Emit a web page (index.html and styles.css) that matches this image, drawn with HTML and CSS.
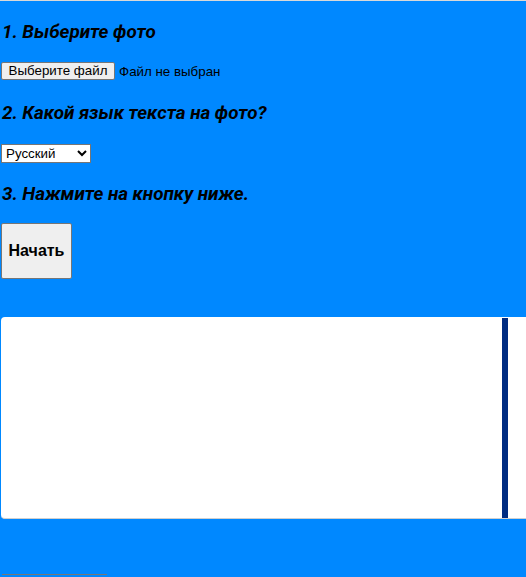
FILE: index.html
```html
<!DOCTYPE html>
<html lang="ru">
<head>
<meta charset="utf-8">
<link rel="stylesheet" href="styles.css">
</head>
<body>
<main class="page">
  <h2 class="step">1. Выберите фото</h2>
  <div class="file-row">
    <button class="file-btn" type="button">Выберите файл</button>
    <span class="file-status">Файл не выбран</span>
  </div>
  <h2 class="step">2. Какой язык текста на фото?</h2>
  <select class="lang">
    <option>Русский</option>
    <option>English</option>
  </select>
  <h2 class="step">3. Нажмите на кнопку ниже.</h2>
  <button class="start" type="button">Начать</button>
  <div class="output">
    <div class="output-bar"></div>
  </div>
  <div class="next-btn"></div>
</main>
</body>
</html>
```
FILE: styles.css
```css
html, body {
  margin: 0;
  padding: 0;
}
body {
  background: #0088ff;
  border-top: 1px solid #d9d9d9;
  overflow: hidden;
  height: 576px;
  font-family: "Liberation Sans", Arial, sans-serif;
}
.page {
  display: flex;
  flex-direction: column;
  align-items: flex-start;
  padding: 20px 0 0 1px;
}
.step {
  margin: 0 0 0 1px;
  padding-top: 1px;
  font-family: Roboto, "Liberation Sans", sans-serif;
  font-style: italic;
  font-weight: 700;
  font-size: 18.8px;
  line-height: 21px;
  color: #000;
}
.file-row {
  display: flex;
  align-items: center;
  gap: 4px;
  margin: 19px 0 22px;
}
.file-btn {
  box-sizing: border-box;
  height: 18px;
  width: 114px;
  padding: 0 6px;
  margin: 0;
  background: #efefef;
  border: 1px solid #767676;
  border-radius: 2px;
  font-family: "Liberation Sans", Arial, sans-serif;
  font-size: 13.33px;
  line-height: 14px;
  color: #000;
}
.file-status {
  font-size: 13.33px;
  color: #000;
}
.lang {
  box-sizing: border-box;
  width: 90px;
  height: 19px;
  margin: 20px 0 20px;
  font-family: "Liberation Sans", Arial, sans-serif;
  font-size: 13.33px;
  background: #fff;
  border: 1px solid #767676;
  border-radius: 0;
  color: #000;
}
.start {
  box-sizing: border-box;
  width: 71px;
  height: 56px;
  margin: 18px 0 0;
  padding: 0;
  background: #efefef;
  border: 1px solid #767676;
  border-radius: 2px;
  font-family: "Liberation Sans", Arial, sans-serif;
  font-weight: 700;
  font-size: 16px;
  color: #000;
}
.output {
  position: relative;
  box-sizing: border-box;
  width: 540px;
  height: 202px;
  margin-top: 38px;
  background: #fff;
  border-bottom: 1px solid #cfcfcf;
  border-radius: 4px;
}
.output-bar {
  position: absolute;
  left: 501px;
  top: 1px;
  width: 6px;
  bottom: 0;
  background: #002c82;
}
.next-btn {
  box-sizing: border-box;
  width: 105px;
  height: 30px;
  margin: 55px 0 0 1px;
  background: #0088ff;
  border-top: 1px solid #767676;
}
```
